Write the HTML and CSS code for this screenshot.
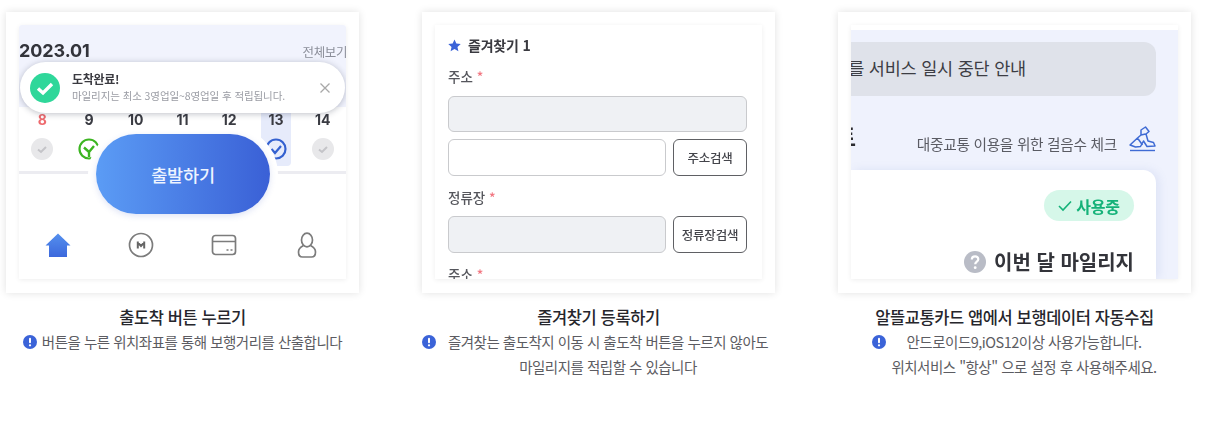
FILE: index.html
```html
<!DOCTYPE html>
<html lang="ko">
<head>
<meta charset="utf-8">
<title>마일리지 적립 안내</title>
<link rel="stylesheet" href="styles.css">
</head>
<body>
<main class="steps">
  <section class="step">
    <div class="frame">
      <div class="screen screen-home">
        <div class="home-top">
          <div class="month-row"><strong class="month">2023.01</strong><span class="see-all">전체보기</span></div>
          <div class="week">
            <div class="day"><span class="num num-red">8</span><span class="dot"><svg viewBox="0 0 22 22"><path d="M7 11.500l3 2.500 5-5" fill="none" stroke="#c4c4c8" stroke-width="2"/></svg></span></div>
            <div class="day"><span class="num">9</span><span class="dot dot-line"><svg viewBox="0 0 22 22"><circle cx="11" cy="11" r="9.500" fill="#fff" stroke="#3cb521" stroke-width="2.200"/><path d="M6 9.500l5 4.500 5-6M11 14v5" fill="none" stroke="#3cb521" stroke-width="2.400"/></svg></span></div>
            <div class="day"><span class="num">10</span></div>
            <div class="day"><span class="num">11</span></div>
            <div class="day"><span class="num">12</span></div>
            <div class="day day-today"><span class="num">13</span><span class="dot dot-line"><svg viewBox="0 0 22 22"><circle cx="11" cy="11" r="9.500" fill="none" stroke="#3461d0" stroke-width="2.200"/><path d="M6.500 11l3.500 4 6-7" fill="none" stroke="#3461d0" stroke-width="2.200"/></svg></span></div>
            <div class="day"><span class="num">14</span><span class="dot"><svg viewBox="0 0 22 22"><path d="M7 11.500l3 2.500 5-5" fill="none" stroke="#c4c4c8" stroke-width="2"/></svg></span></div>
          </div>
        </div>
        <nav class="tabbar">
          <svg class="tab" viewBox="0 0 26 26"><defs><linearGradient id="homeFill" x1="0" y1="0" x2="0" y2="1"><stop offset="0" stop-color="#5590ee"/><stop offset="1" stop-color="#3c68dc"/></linearGradient></defs><path d="M13 1.500L.5 13.500h3.500V25h18V13.500h3.500z" fill="url(#homeFill)"/></svg>
          <svg class="tab" viewBox="0 0 26 26"><circle cx="13" cy="13" r="11.500" fill="none" stroke="#7c7c7c" stroke-width="1.700"/><path d="M9.800 9.500v7M16.200 9.500v7M9.800 10.500l3.200 3.500 3.200-3.500" fill="none" stroke="#666" stroke-width="2"/></svg>
          <svg class="tab" viewBox="0 0 26 26"><rect x="1.500" y="3.500" width="23" height="19" rx="3" fill="none" stroke="#7c7c7c" stroke-width="1.700"/><path d="M1.500 9.500h23" stroke="#7c7c7c" stroke-width="1.700"/><path d="M15.500 18h2M19.500 18h2" stroke="#7c7c7c" stroke-width="1.700"/></svg>
          <svg class="tab" viewBox="0 0 26 26"><ellipse cx="13" cy="8" rx="5.500" ry="6.800" fill="none" stroke="#7c7c7c" stroke-width="1.700"/><path d="M9.500 13.500c-2 1-5 3-5 6.500 0 3 1.500 5 4 5h9c2.500 0 4-2 4-5 0-3.500-3-5.500-5-6.500" fill="none" stroke="#7c7c7c" stroke-width="1.700"/></svg>
        </nav>
        <div class="toast">
          <svg class="toast-icon" viewBox="0 0 30 30"><circle cx="15" cy="15" r="15" fill="#2fd79a"/><path d="M8 15.500l5 4.500 9-9" fill="none" stroke="#fff" stroke-width="3.400"/></svg>
          <div class="toast-body"><strong class="toast-title">도착완료!</strong><span class="toast-text">마일리지는 최소 3영업일~8영업일 후 적립됩니다.</span></div>
          <svg class="toast-close" viewBox="0 0 12 12"><path d="M1.500 1.500l9 9M10.500 1.500l-9 9" stroke="#a8a8a8" stroke-width="1.300"/></svg>
        </div>
        <div class="depart-halo"><div class="depart">출발하기</div></div>
      </div>
    </div>
    <h2 class="step-title">출도착 버튼 누르기</h2>
    <div class="note">
      <svg class="note-icon" viewBox="0 0 14 14"><circle cx="7" cy="7" r="7" fill="#3b63d8"/><rect x="6" y="2.800" width="2" height="5.400" rx="1" fill="#fff"/><circle cx="7" cy="10.300" r="1.150" fill="#fff"/></svg>
      <p class="note-text">버튼을 누른 위치좌표를 통해 보행거리를 산출합니다</p>
    </div>
  </section>

  <section class="step">
    <div class="frame">
      <div class="screen screen-form">
        <div class="fav-title"><svg class="star" viewBox="0 0 14 14"><path d="M7 .5l2 4.400 4.700.5-3.500 3.200 1 4.700L7 10.900l-4.200 2.400 1-4.700L.3 5.400 5 4.900z" fill="#3b63d8"/></svg><strong>즐겨찾기 1</strong></div>
        <div class="label">주소 <span class="req">*</span></div>
        <div class="field field-off field-full"></div>
        <div class="field-row"><div class="field"></div><div class="search-btn">주소검색</div></div>
        <div class="label label-mid">정류장 <span class="req">*</span></div>
        <div class="field-row"><div class="field field-off"></div><div class="search-btn">정류장검색</div></div>
        <div class="label label-last">주소 <span class="req">*</span></div>
      </div>
    </div>
    <h2 class="step-title">즐겨찾기 등록하기</h2>
    <div class="note note-wide">
      <svg class="note-icon" viewBox="0 0 14 14"><circle cx="7" cy="7" r="7" fill="#3b63d8"/><rect x="6" y="2.800" width="2" height="5.400" rx="1" fill="#fff"/><circle cx="7" cy="10.300" r="1.150" fill="#fff"/></svg>
      <p class="note-text">즐겨찾는 출도착지 이동 시 출도착 버튼을 누르지 않아도<br>마일리지를 적립할 수 있습니다</p>
    </div>
  </section>

  <section class="step">
    <div class="frame">
      <div class="screen screen-app">
        <div class="notice"><span class="notice-text">를 서비스 일시 중단 안내</span></div>
        <div class="walk-row">
          <strong class="cut-word">트</strong>
          <div class="walk-check"><span>대중교통 이용을 위한 걸음수 체크</span>
            <svg class="walk-icon" viewBox="0 0 27 26"><path d="M1 24.500h25" stroke="#3f6bd4" stroke-width="1.400"/><path d="M12 4l4.500-3 3.500 4.500-3 2.500 2 7 5.500 1.500 1.500 3.500-8 .5-3.500-5.500-3 5.500-5 .5L1 19l7.500-7L12 9zM8.500 12l5 7M16.500 8l-4.500 1" fill="none" stroke="#3f6bd4" stroke-width="1.500" stroke-linejoin="round"/></svg>
          </div>
        </div>
        <div class="mileage-card">
          <div class="badge"><svg class="badge-check" viewBox="0 0 14 12"><path d="M1 6l4 4 8-8.500" fill="none" stroke="#15b279" stroke-width="1.600"/></svg>사용중</div>
          <div class="mileage-title"><svg class="help" viewBox="0 0 22 22"><circle cx="11" cy="11" r="11" fill="#b9bcc6"/><path d="M7.800 8.500c0-2 1.500-3.200 3.300-3.200s3.200 1.100 3.200 2.900c0 2.400-3.100 2.500-3.100 5" fill="none" stroke="#fff" stroke-width="2.200"/><circle cx="11.200" cy="16.700" r="1.400" fill="#fff"/></svg><strong>이번 달 마일리지</strong></div>
        </div>
      </div>
    </div>
    <h2 class="step-title">알뜰교통카드 앱에서 보행데이터 자동수집</h2>
    <div class="note">
      <svg class="note-icon" viewBox="0 0 14 14"><circle cx="7" cy="7" r="7" fill="#3b63d8"/><rect x="6" y="2.800" width="2" height="5.400" rx="1" fill="#fff"/><circle cx="7" cy="10.300" r="1.150" fill="#fff"/></svg>
      <p class="note-text">안드로이드9,iOS12이상 사용가능합니다.<br>위치서비스 "항상" 으로 설정 후 사용해주세요.</p>
    </div>
  </section>
</main>
</body>
</html>
```
FILE: styles.css
```css
* { box-sizing: border-box; }
html, body { margin: 0; background: #fff; }
body {
  width: 1230px;
  height: 421px;
  overflow: hidden;
  font-family: "Noto Sans CJK KR", "Noto Sans", sans-serif;
  color: #222;
}
.steps { display: flex; gap: 63px; padding: 12px 0 0 6px; }
.step { width: 353px; display: flex; flex-direction: column; align-items: center; }
.frame {
  width: 353px;
  height: 281px;
  padding: 13px;
  background: #fff;
  box-shadow: 0 0 8px rgba(0, 0, 0, .12);
}
.screen {
  position: relative;
  width: 327px;
  height: 254px;
  overflow: hidden;
  background: #fff;
  box-shadow: 0 1px 5px rgba(0, 0, 0, .07);
  filter: blur(.35px);
}
.step-title {
  margin: 13px 0 0;
  font-size: 16.5px;
  line-height: 22px;
  font-weight: 500;
  letter-spacing: -.4px;
  color: #26262c;
}
.note { display: flex; justify-content: center; gap: 5px; margin-top: 2px; width: 353px; }
.note-icon { width: 14px; height: 14px; flex: none; margin-top: 5px; }
.note-text {
  margin: 0;
  font-size: 14.5px;
  line-height: 24.5px;
  letter-spacing: -.5px;
  text-align: center;
  color: #5c5c62;
  white-space: nowrap;
}
.note-wide .note-text { width: 335px; }

/* first screen */
.screen-home { display: flex; flex-direction: column; border-radius: 3px 3px 0 0; }
.home-top {
  height: 149px;
  background: #f1f3fd;
  border-bottom: 3px solid #ececf1;
}
.month-row { display: flex; justify-content: space-between; align-items: center; height: 26px; margin-top: 13px; }
.month { font-size: 18px; line-height: 26px; font-weight: 700; color: #33343b; font-family: "Inter", "Noto Sans", sans-serif; letter-spacing: -.1px; }
.see-all { font-size: 12.5px; color: #8b8e99; letter-spacing: -.4px; margin-right: -1px; }
.week { display: grid; grid-template-columns: repeat(7, 1fr); margin-top: 43px; height: 64px; background: #fff; }
.day { display: flex; flex-direction: column; align-items: center; gap: 8px; padding-top: 3px; height: 59px; }
.day-today { width: 30px; justify-self: center; background: #e6ebfb; border-radius: 0 0 4px 4px; }
.num { font-size: 14px; line-height: 20px; font-weight: 700; color: #3a3b42; font-family: "Inter", "Noto Sans", sans-serif; }
.num-red { color: #ee6a6e; }
.dot { width: 22px; height: 22px; border-radius: 50%; background: #e8e8ea; display: block; }
.dot svg { display: block; width: 22px; height: 22px; }
.dot-line { background: transparent; }
.tabbar {
  flex: 1;
  display: grid;
  grid-template-columns: repeat(4, 83px);
  justify-content: center;
  justify-items: center;
  align-items: start;
  padding-top: 58px;
  margin-left: -1px;
}
.tab { width: 26px; height: 26px; }
.toast {
  position: absolute;
  left: 1px;
  top: 37px;
  width: 325px;
  height: 51px;
  display: flex;
  align-items: center;
  padding: 0 14px 0 10px;
  background: #fff;
  border-radius: 26px;
  box-shadow: 0 1px 6px rgba(40, 45, 70, .3);
}
.toast-icon { width: 30px; height: 30px; flex: none; }
.toast-body { display: flex; flex-direction: column; margin: -2px 0 0 12px; flex: 1; }
.toast-title { font-size: 12px; line-height: 18px; font-weight: 700; color: #3a3a40; letter-spacing: -.3px; }
.toast-text { font-size: 10.5px; line-height: 15px; color: #9a9ca4; letter-spacing: -.1px; }
.toast-close { width: 12px; height: 12px; flex: none; }
.depart-halo {
  position: absolute;
  left: 69px;
  top: 100px;
  width: 190px;
  height: 98px;
  padding: 9px 8px 7px;
  background: #fff;
  border-radius: 50px 50px 48px 48px;
}
.depart {
  height: 80px;
  border-radius: 40px;
  background: linear-gradient(90deg, #5b9cf5, #3a60d6);
  box-shadow: 0 2px 6px rgba(70, 100, 200, .18);
  display: flex;
  align-items: center;
  justify-content: center;
  color: #eef4ff;
  font-size: 17.5px;
  font-weight: 500;
  letter-spacing: -.2px;
}

/* second screen */
.screen-form { padding: 0 15px 0 13px; }
.fav-title { display: flex; align-items: center; gap: 7px; height: 20px; margin-top: 10px; font-size: 14px; color: #3a3a40; letter-spacing: -.2px; }
.fav-title strong { font-weight: 700; }
.star { width: 13px; height: 13px; flex: none; }
.label { font-size: 13.5px; line-height: 18px; font-weight: 500; color: #55565c; margin-top: 12px; height: 18px; }
.req { color: #f27680; }
.field { flex: 1; height: 37px; background: #fff; border: 1px solid #c9cacd; border-radius: 6px; }
.field-off { background: #eff1f4; }
.field-full { height: 36px; margin-top: 11px; }
.field-row { display: flex; gap: 7px; margin-top: 7px; }
.search-btn {
  width: 74px;
  height: 37px;
  flex: none;
  background: #fff;
  border: 1px solid #5f6064;
  border-radius: 6px;
  display: flex;
  align-items: center;
  justify-content: center;
  font-size: 12.5px;
  font-weight: 500;
  color: #44454b;
  letter-spacing: -.2px;
  white-space: nowrap;
}
.label-mid { margin-top: 12px; }
.label-mid + .field-row { margin-top: 10px; }
.label-last { margin-top: 12px; }

/* third screen */
.screen-app { padding-top: 6px; background: #eff2fd; border-top: 5px solid #fff; display: flex; flex-direction: column; }
.notice {
  width: 305px;
  height: 54px;
  margin-top: 6px;
  flex: none;
  background: #dfe2ea;
  border-radius: 0 12px 12px 0;
  display: flex;
  justify-content: flex-end;
  align-items: center;
  padding: 0 130px 0 0;
  overflow: hidden;
  font-size: 17.5px;
  color: #3c3d44;
  letter-spacing: -.2px;
  white-space: nowrap;
}
.notice-text { flex: none; margin-top: -3px; }
.walk-row { display: flex; justify-content: space-between; align-items: center; width: 305px; height: 30px; margin-top: 32px; flex: none; }
.cut-word { font-size: 24px; line-height: 30px; font-weight: 700; margin-left: -17px; margin-top: -14px; color: #2b2b30; }
.walk-check { display: flex; align-items: center; gap: 12px; font-size: 14.7px; color: #5a5b63; letter-spacing: -.3px; }
.walk-icon { width: 27px; height: 26px; margin-top: -8px; }
.mileage-card {
  width: 305px;
  flex: 1;
  margin-top: 12px;
  background: #fff;
  border-radius: 0 13px 0 0;
  box-shadow: 3px 0 10px rgba(100, 120, 190, .13);
  display: flex;
  flex-direction: column;
  align-items: flex-end;
  padding: 20px 22px 0 0;
}
.badge {
  width: 90px;
  height: 31px;
  border-radius: 16px;
  background: #d6f7e9;
  color: #15b279;
  font-size: 16px;
  font-weight: 700;
  display: flex;
  align-items: center;
  justify-content: center;
  gap: 4px;
  letter-spacing: -.3px;
}
.badge-check { width: 14px; height: 12px; }
.mileage-title { display: flex; align-items: center; gap: 8px; margin-top: 26px; font-size: 20px; line-height: 30px; color: #33343a; }
.mileage-title strong { font-weight: 700; }
.help { width: 22px; height: 22px; flex: none; }
```
